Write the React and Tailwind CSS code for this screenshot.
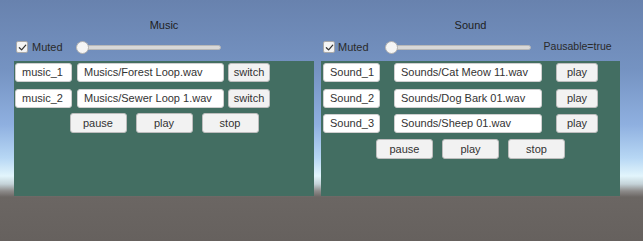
import React from 'react';

const font = "font-['Liberation_Sans',Arial,sans-serif]";

// ── small widgets ──────────────────────────────────────────────────
const Field = ({ w, children }) => (
  <div className={`${w} h-[19px] shrink-0 flex items-center pl-[6px] bg-white border border-[#cfcfcf] rounded-[3px] text-[11px] text-[#333] leading-none`}>
    {children}
  </div>
);

const Btn = ({ w, h = 'h-[19px]', children }) => (
  <div className={`${w} ${h} shrink-0 flex items-center justify-center bg-[#f2f2f2] border border-[#bdbdbd] rounded-[3px] text-[11px] text-[#333] leading-none`}>
    {children}
  </div>
);

const Check = () => (
  <div className="w-[12px] h-[12px] shrink-0 flex items-center justify-center bg-[#f4f4f4] border border-[#a9a9a9] rounded-[2px]">
    <svg width="9" height="9" viewBox="0 0 10 10" fill="none" stroke="#333" strokeWidth="1.4" strokeLinecap="round" strokeLinejoin="round">
      <path d="M1.5 5.2 L4 7.6 L8.6 2.4" />
    </svg>
  </div>
);

const Slider = ({ w }) => (
  <div className={`${w} h-[13px] shrink-0 relative flex items-center`}>
    <div className="w-full h-[5px] bg-[#d8d8d8] border border-[#b8b8b8] rounded-full" />
    <div className="absolute left-0 top-0 w-[13px] h-[13px] rounded-full bg-[#f5f5f5] border border-[#b0b0b0]" />
  </div>
);

const BottomButtons = ({ mt }) => (
  <div className={`flex justify-center gap-[9px] ${mt}`}>
    <Btn w="w-[57px]" h="h-[20px]">pause</Btn>
    <Btn w="w-[57px]" h="h-[20px]">play</Btn>
    <Btn w="w-[57px]" h="h-[20px]">stop</Btn>
  </div>
);

// ── panels ─────────────────────────────────────────────────────────
const MusicPanel = () => (
  <div className="w-[300px] flex flex-col pt-[18px]">
    <div className="h-[14px] flex items-center justify-center text-[11px] text-[#1e1e1e]">Music</div>
    <div className="h-[16px] mt-[7px] flex items-center pl-[2px]">
      <Check />
      <span className="ml-[4px] text-[11px] text-[#2a2a2a]">Muted</span>
      <div className="ml-[13px]"><Slider w="w-[145px]" /></div>
    </div>
    <div className="mt-[6px] h-[135px] bg-[#436e62] pt-[2px] flex flex-col">
      <div className="flex gap-[5px] pl-[1px]">
        <Field w="w-[57px]">music_1</Field>
        <Field w="w-[147px]">Musics/Forest Loop.wav</Field>
        <div className="ml-[-1px]"><Btn w="w-[42px]">switch</Btn></div>
      </div>
      <div className="flex gap-[5px] pl-[1px] mt-[7px]">
        <Field w="w-[57px]">music_2</Field>
        <Field w="w-[147px]">Musics/Sewer Loop 1.wav</Field>
        <div className="ml-[-1px]"><Btn w="w-[42px]">switch</Btn></div>
      </div>
      <BottomButtons mt="mt-[5px]" />
    </div>
  </div>
);

const sounds = [
  ['Sound_1', 'Sounds/Cat Meow 11.wav'],
  ['Sound_2', 'Sounds/Dog Bark 01.wav'],
  ['Sound_3', 'Sounds/Sheep 01.wav'],
];

const SoundPanel = () => (
  <div className="w-[299px] ml-[-1px] flex flex-col pt-[18px]">
    <div className="h-[14px] flex items-center justify-center text-[11px] text-[#1e1e1e]">Sound</div>
    <div className="h-[16px] mt-[7px] flex items-center pl-[2px]">
      <Check />
      <span className="ml-[3px] text-[11px] text-[#2a2a2a]">Muted</span>
      <div className="ml-[16px]"><Slider w="w-[146px]" /></div>
      <span className="ml-[13px] text-[10.5px] text-[#2a2a2a]">Pausable=true</span>
    </div>
    <div className="mt-[6px] h-[135px] bg-[#436e62] pt-[2px] flex flex-col">
      {sounds.map(([name, path], i) => (
        <div key={name} className={`flex gap-[14px] pl-[2px] ${i === 0 ? '' : i === 1 ? 'mt-[7px]' : 'mt-[6px]'}`}>
          <Field w="w-[57px]">{name}</Field>
          <Field w="w-[148px]">{path}</Field>
          <Btn w="w-[42px]">play</Btn>
        </div>
      ))}
      <BottomButtons mt="mt-[6px]" />
    </div>
  </div>
);

export default function App() {
  return (
    <div className={`${font} w-[643px] h-[241px] overflow-hidden flex gap-[8px] pl-[14px] bg-[linear-gradient(to_bottom,#6882ae_0px,#7593c2_70px,#8fb0e0_125px,#b7d7f4_158px,#e2f5fc_176px,#c4d2d8_184px,#8d8b8a_191px,#6b6663_197px,#66615e_241px)]`}>
      <MusicPanel />
      <SoundPanel />
    </div>
  );
}
